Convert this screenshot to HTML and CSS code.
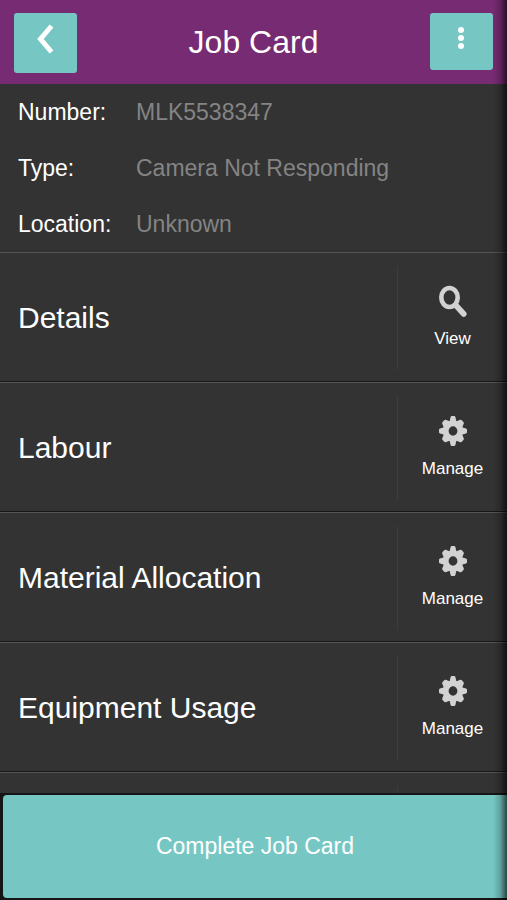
FILE: index.html
```html
<!DOCTYPE html>
<html lang="en">
<head>
<meta charset="utf-8">
<meta name="viewport" content="width=device-width, initial-scale=1">
<title>Job Card</title>
<link rel="stylesheet" href="styles.css">
</head>
<body>
<svg class="defs" aria-hidden="true">
  <symbol id="gear" viewBox="0 0 28 32">
    <g fill="currentColor" transform="translate(0 1)">
      <path fill-rule="evenodd" d="M14 4.500A10 10.500 0 1 0 14 25.500A10 10.500 0 1 0 14 4.500ZM14 10.300A4.400 4.700 0 1 1 14 19.700A4.400 4.700 0 1 1 14 10.300Z"/>
      <path d="M10.500 6L11.600 1Q11.900 0 12.800 0H15.200Q16.100 0 16.400 1L17.500 6Z"/>
      <path d="M10.500 24L11.600 29Q11.900 30 12.800 30H15.200Q16.100 30 16.400 29L17.500 24Z"/>
      <path d="M5.500 11.300L1 12.500Q0 12.800 0 13.700V16.300Q0 17.200 1 17.500L5.500 18.700Z"/>
      <path d="M22.500 11.300L27 12.500Q28 12.800 28 13.700V16.300Q28 17.200 27 17.500L22.500 18.700Z"/>
      <path d="M5 12L3.200 7.600Q2.900 6.700 3.600 5.900L5.200 4.200Q5.900 3.500 6.800 3.800L11 5.500Z"/>
      <path d="M23 12L24.800 7.600Q25.100 6.700 24.400 5.900L22.800 4.200Q22.100 3.500 21.200 3.800L17 5.500Z"/>
      <path d="M5 18L3.200 22.400Q2.900 23.300 3.600 24.100L5.200 25.800Q5.900 26.500 6.800 26.200L11 24.500Z"/>
      <path d="M23 18L24.800 22.400Q25.100 23.300 24.400 24.100L22.800 25.800Q22.100 26.500 21.200 26.200L17 24.500Z"/>
    </g>
  </symbol>
</svg>
<div class="app">
  <header class="bar">
    <button class="bar-button bar-button-back" type="button" aria-label="Back">
      <svg width="18" height="30" viewBox="0 0 18 30"><path d="M14.500 2L3.500 15L14.500 28" fill="none" stroke="#fff" stroke-width="5"/></svg>
    </button>
    <h1 class="title">Job Card</h1>
    <button class="bar-button" type="button" aria-label="More options">
      <svg width="9" height="24" viewBox="0 0 9 24" fill="#fff"><circle cx="4" cy="4" r="3"/><circle cx="4" cy="12" r="3"/><circle cx="4" cy="20" r="3"/></svg>
    </button>
  </header>
  <main class="content">
    <dl class="summary">
      <dt>Number:</dt><dd>MLK5538347</dd>
      <dt>Type:</dt><dd>Camera Not Responding</dd>
      <dt>Location:</dt><dd>Unknown</dd>
    </dl>
    <ul class="sections">
      <li class="section">
        <h2 class="name">Details</h2>
        <button class="action" type="button">
          <svg width="28" height="32" viewBox="0 0 28 32" fill="none" stroke="currentColor"><ellipse cx="10.500" cy="12.500" rx="8.200" ry="9.500" stroke-width="4.600"/><path d="M17 20.500L24.800 29" stroke-width="5.600" stroke-linecap="round"/></svg>
          <span>View</span>
        </button>
      </li>
      <li class="section">
        <h2 class="name">Labour</h2>
        <button class="action" type="button"><svg width="28" height="32"><use href="#gear"/></svg><span>Manage</span></button>
      </li>
      <li class="section">
        <h2 class="name">Material Allocation</h2>
        <button class="action" type="button"><svg width="28" height="32"><use href="#gear"/></svg><span>Manage</span></button>
      </li>
      <li class="section">
        <h2 class="name">Equipment Usage</h2>
        <button class="action" type="button"><svg width="28" height="32"><use href="#gear"/></svg><span>Manage</span></button>
      </li>
      <li class="section"><div class="action"></div></li>
    </ul>
  </main>
  <footer class="footer">
    <button class="complete" type="button">Complete Job Card</button>
  </footer>
</div>
</body>
</html>
```
FILE: styles.css
```css
* {
  box-sizing: border-box;
}

body {
  margin: 0;
  background: #333;
  color: #fff;
  font-family: "Liberation Sans", Arial, sans-serif;
}

button {
  border: 0;
  font-family: inherit;
  color: inherit;
}

.defs {
  position: absolute;
  width: 0;
  height: 0;
}

.app {
  position: relative;
  display: flex;
  flex-direction: column;
  height: 100vh;
  overflow: hidden;
}

/* Shadow cast along the right edge of the panel */
.app::after {
  content: "";
  position: absolute;
  top: 0;
  right: 0;
  bottom: 0;
  width: 14px;
  background: linear-gradient(to right, rgba(0, 0, 0, 0), rgba(0, 0, 0, 0.18) 50%, rgba(0, 0, 0, 0.65));
  pointer-events: none;
}

.bar {
  display: flex;
  flex: none;
  align-items: flex-start;
  justify-content: space-between;
  height: 84px;
  padding: 13px 14px 0;
  background: #772b72;
}

.bar-button {
  display: flex;
  align-items: flex-start;
  justify-content: center;
  width: 63px;
  height: 57px;
  padding: 13px 0 0;
  border-radius: 3px;
  background: #76c7c3;
}

.bar-button-back {
  height: 60px;
  padding: 11px 0 0;
}

.title {
  margin: 0;
  font-size: 32px;
  font-weight: 400;
  line-height: 58px;
}

.content {
  flex: 1;
  min-height: 0;
  overflow: hidden;
}

.summary {
  display: grid;
  grid-template-columns: 118px 1fr;
  margin: 0;
  padding: 0 18px;
  font-size: 23px;
  line-height: 56px;
}

.summary dd {
  margin: 0;
  color: #848484;
}

.sections {
  margin: 0;
  padding: 0;
  list-style: none;
}

.section {
  display: flex;
  align-items: center;
  justify-content: space-between;
  height: 130px;
  padding: 2px 0 0 18px;
  border-top: 1px solid #555;
  border-bottom: 1px solid #161616;
}

.name {
  margin: 0;
  font-size: 30px;
  font-weight: 400;
}

.action {
  display: flex;
  flex-direction: column;
  align-items: center;
  justify-content: center;
  gap: 10px;
  width: 110px;
  height: 104px;
  margin-left: auto;
  padding: 0;
  border-left: 1px solid #3d3d3d;
  background: none;
  color: #d2d2d2;
  font-size: 17px;
  line-height: 24px;
}

.action span {
  color: #fff;
}

.footer {
  flex: none;
  padding: 2px 0 2px 3px;
  background: #151515;
}

.complete {
  display: block;
  width: 100%;
  height: 103px;
  border-radius: 4px 0 0 4px;
  background: #76c7c3;
  font-size: 23px;
}
```
